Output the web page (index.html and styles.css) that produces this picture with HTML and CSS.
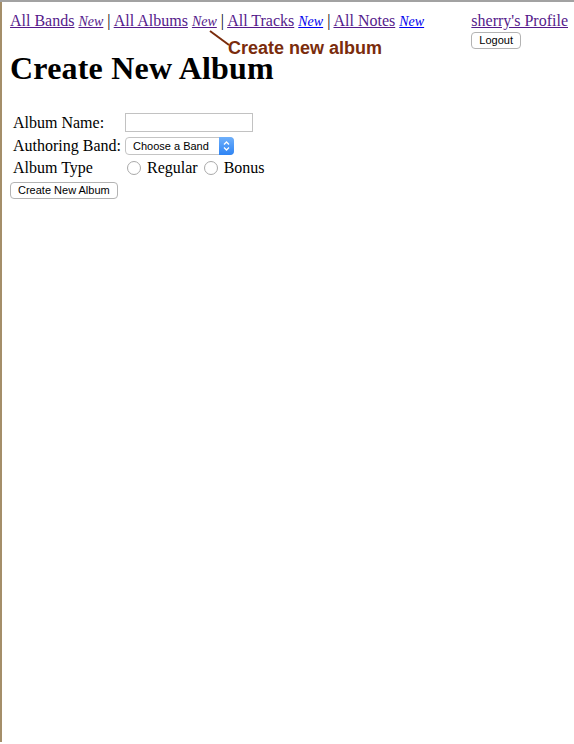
FILE: index.html
```html
<!DOCTYPE html>
<html>
<head>
<meta charset="utf-8">
<title>Create New Album</title>
<link rel="stylesheet" href="styles.css">
</head>
<body>
<div class="frame">
  <div class="page">
    <div class="profile">
      <a class="visited" href="#">sherry's Profile</a><br>
      <button class="btn">Logout</button>
    </div>
    <div class="nav">
      <a class="visited" href="#">All Bands</a> <a class="new visited" href="#">New</a> |
      <a class="visited" href="#">All Albums</a> <a class="new visited" href="#">New</a> |
      <a class="visited" href="#">All Tracks</a> <a class="new" href="#">New</a> |
      <a class="visited" href="#">All Notes</a> <a class="new" href="#">New</a>
    </div>
    <h1 class="title">Create New Album</h1>
    <form class="form">
      <table class="fields">
        <tr>
          <td>Album Name:</td>
          <td><input class="text" type="text"></td>
        </tr>
        <tr>
          <td>Authoring Band:</td>
          <td>
            <span class="selectwrap">
              <select class="select"><option>Choose a Band</option></select>
              <span class="arrow"><svg width="13" height="16" viewBox="0 0 13 16"><path d="M4 6.5 L6.5 4 L9 6.5 M4 9.5 L6.5 12 L9 9.5" fill="none" stroke="#fff" stroke-width="1.3"/></svg></span>
            </span>
          </td>
        </tr>
        <tr>
          <td>Album Type</td>
          <td class="radios"><input class="radio" type="radio" name="t"> Regular <input class="radio" type="radio" name="t"> Bonus</td>
        </tr>
      </table>
      <button class="btn" type="button">Create New Album</button>
    </form>
    <div class="annot">
      <svg class="annot-line" width="24" height="18" viewBox="0 0 24 18"><path d="M1 1 L20 15" stroke="#7a2c0c" stroke-width="2" fill="none"/></svg>
      <span class="annot-text">Create new album</span>
    </div>
  </div>
</div>
</body>
</html>
```
FILE: styles.css
```css
html, body {
  margin: 0;
  padding: 0;
  background: #fff;
}
body {
  font-family: "Liberation Serif", "Times New Roman", serif;
  font-size: 16px;
  color: #000;
}
.frame {
  border-top: 2px solid #a2a2a2;
  min-height: 742px;
  box-sizing: border-box;
}
.page {
  border-left: 2px solid #a48e69;
  min-height: 740px;
  box-sizing: border-box;
  padding: 8px;
  position: relative;
}
a {
  color: #0000ee;
}
a.visited {
  color: #551a8b;
}
.new {
  font-style: italic;
  font-size: 14px;
}
.nav {
  line-height: 18px;
  padding-top: 2px;
}
.profile {
  float: right;
  margin-right: -2px;
  line-height: 18px;
  padding-top: 2px;
}
.btn {
  font-family: "Liberation Sans", Arial, sans-serif;
  font-size: 11px;
  background: #fff;
  border: 1px solid #b3b3b3;
  border-radius: 4px;
  padding: 1px 7px 2px;
  height: 17px;
  line-height: 12px;
  color: #000;
  margin: 0;
}
.profile .btn {
  margin-top: 1px;
}
.title {
  font-size: 32px;
  font-weight: bold;
  margin: 19px 0 23px;
  line-height: 37px;
  letter-spacing: 0.2px;
}
.form {
  margin: 0;
}
.fields {
  border-spacing: 2px;
  margin-left: 0;
}
.fields td {
  padding: 1px;
  vertical-align: middle;
  line-height: 18px;
}
.text {
  height: 19px;
  border: 1px solid #c2c2c2;
  padding: 0 1px;
  margin: 0;
  box-sizing: border-box;
  width: 128px;
  display: block;
}
.selectwrap {
  position: relative;
  display: inline-block;
  vertical-align: middle;
}
.select {
  appearance: none;
  -webkit-appearance: none;
  font-family: "Liberation Sans", Arial, sans-serif;
  font-size: 11px;
  width: 109px;
  height: 18px;
  border: 1px solid #c4c4c4;
  border-radius: 4px;
  background: #fff;
  padding: 0 0 0 7px;
  margin: 0;
  color: #000;
  display: block;
}
.arrow {
  position: absolute;
  right: 0;
  top: 0;
  width: 15px;
  height: 18px;
  background: linear-gradient(#6fb0fb, #2e84f4);
  border-radius: 0 4px 4px 0;
  display: flex;
  align-items: center;
  justify-content: center;
}
.radios {
  white-space: nowrap;
}
.radio {
  appearance: none;
  -webkit-appearance: none;
  width: 14px;
  height: 14px;
  border: 1px solid #a9a9a9;
  border-radius: 50%;
  background: #fff;
  margin: 0 2px 0 2px;
  vertical-align: -2px;
  box-sizing: border-box;
}
.form .btn {
  margin-top: 2px;
}
.annot {
  position: absolute;
  left: 207px;
  top: 28px;
  width: 200px;
  height: 30px;
}
.annot-line {
  position: absolute;
  left: 0;
  top: 0;
}
.annot-text {
  position: absolute;
  left: 19px;
  top: 8px;
  font-family: "Liberation Sans", Arial, sans-serif;
  font-weight: bold;
  font-size: 18px;
  color: #7a2c0c;
  white-space: nowrap;
}
```
